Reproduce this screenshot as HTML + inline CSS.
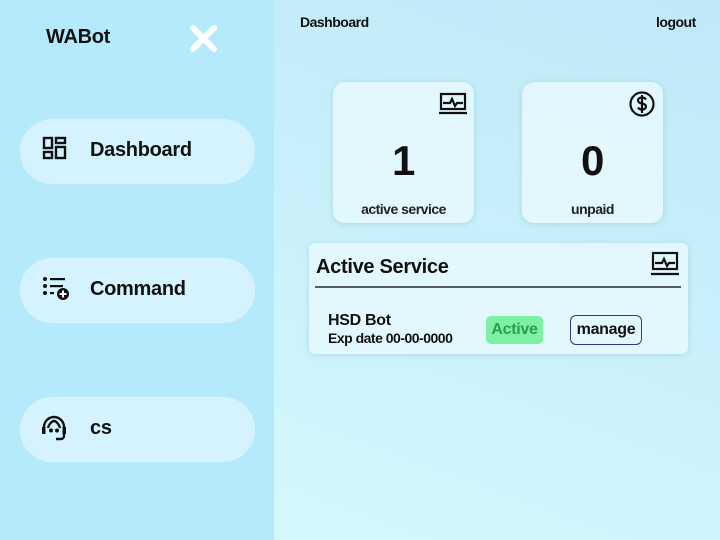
<!DOCTYPE html>
<html><head><meta charset="utf-8"><style>
*{margin:0;padding:0;box-sizing:border-box}
body{width:720px;height:540px;overflow:hidden;font-family:"Liberation Sans",Arial,sans-serif;color:#111;position:relative;background:linear-gradient(20deg,#d6fbfd 0%,#cdf3fb 40%,#bfe9f8 100%);letter-spacing:-0.3px}
.side{position:absolute;left:0;top:0;width:274px;height:540px;background:#b5e9fc}
.abs{position:absolute}
.nav{position:absolute;left:20px;width:235px;height:65px;border-radius:32px;background:rgba(225,246,255,.7);}
.nav span{position:absolute;left:70px;top:20px;font-size:20px;font-weight:bold}
.card{position:absolute;background:rgba(232,249,255,.8);border-radius:12px;box-shadow:0 1px 6px rgba(100,160,190,.3)}
</style></head><body>
<div class="side">
<div class="abs" style="left:46px;top:26px;font-size:20px;font-weight:bold">WABot</div>
<svg class="abs" style="left:188px;top:23px" width="31" height="31" viewBox="0 0 31 31"><path d="M5 5L26 26M26 5L5 26" stroke="#fff" stroke-width="6" stroke-linecap="round"/></svg>
<div class="nav" style="top:119px"><svg class="abs" style="left:22px;top:17px" width="26" height="26" viewBox="0 0 26 26" fill="none" stroke="#111" stroke-width="2.4"><rect x="2" y="2" width="8" height="10"/><rect x="14" y="2" width="9" height="5"/><rect x="2" y="16" width="8" height="6"/><rect x="14" y="11" width="9" height="11"/></svg><span>Dashboard</span></div>
<div class="nav" style="top:258px"><svg class="abs" style="left:22px;top:18px" width="28" height="26" viewBox="0 0 28 26"><g fill="#111"><circle cx="3" cy="3" r="2"/><circle cx="3" cy="10" r="2"/><circle cx="3" cy="17" r="2"/><rect x="8" y="2" width="15" height="2.2"/><rect x="8" y="9" width="13" height="2.2"/><rect x="8" y="16" width="4" height="2.2"/><circle cx="21" cy="18" r="6"/></g><path d="M21 14.5v7M17.5 18h7" stroke="#fff" stroke-width="2"/></svg><span>Command</span></div>
<div class="nav" style="top:397px"><svg class="abs" style="left:20px;top:17px" width="30" height="28" viewBox="0 0 30 28" fill="none" stroke="#111" stroke-width="2.4"><path d="M4 17v-4a10 10 0 0 1 20 0v4"/><path d="M8 14c1-4 4-7 6-7s5 3 6 7"/><path d="M24 18v4a3 3 0 0 1-3 3h-5"/><rect x="2" y="13" width="3.5" height="7" fill="#111" stroke="none"/><rect x="22.5" y="13" width="3.5" height="7" fill="#111" stroke="none"/><circle cx="11" cy="16.5" r=".8" fill="#111"/><circle cx="17" cy="16.5" r=".8" fill="#111"/></svg><span>cs</span></div>
</div>
<div class="abs" style="left:300px;top:14px;font-size:14px;font-weight:bold;letter-spacing:-0.5px">Dashboard</div>
<div class="abs" style="left:656px;top:14px;font-size:14px;font-weight:bold;letter-spacing:-0.5px">logout</div>
<div class="card" style="left:333px;top:82px;width:141px;height:141px">
<svg class="abs" style="left:105px;top:10px" width="30" height="24" viewBox="0 0 30 24" fill="none" stroke="#111" stroke-width="2.2"><rect x="3" y="2" width="24" height="15"/><path d="M1 21h28"/><path d="M5 11h7l2-4 3 7 2-3h6"/></svg>
<div class="abs" style="left:0;width:141px;top:55px;text-align:center;font-size:42px;font-weight:bold">1</div>
<div class="abs" style="left:0;width:141px;top:119px;text-align:center;font-size:14px;font-weight:bold;color:#222;letter-spacing:-0.5px">active service</div></div>
<div class="card" style="left:522px;top:82px;width:141px;height:141px">
<svg class="abs" style="left:106px;top:8px" width="28" height="28" viewBox="0 0 28 28" fill="none" stroke="#111" stroke-width="2.2"><circle cx="14" cy="14" r="11.5"/><path d="M18 9.5c-1-1.5-2.5-2-4-2-2.5 0-4 1.3-4 3s1.5 2.5 4 3 4 1.3 4 3-1.5 3-4 3c-1.7 0-3.2-.7-4-2M14 5v18"/></svg>
<div class="abs" style="left:0;width:141px;top:55px;text-align:center;font-size:42px;font-weight:bold">0</div>
<div class="abs" style="left:0;width:141px;top:119px;text-align:center;font-size:14px;font-weight:bold;color:#222;letter-spacing:-0.5px">unpaid</div></div>
<div class="card" style="left:309px;top:243px;width:379px;height:111px;border-radius:6px">
<div class="abs" style="left:7px;top:13px;font-size:20px;font-weight:bold">Active Service</div>
<svg class="abs" style="left:341px;top:8px" width="30" height="26" viewBox="0 0 30 26" fill="none" stroke="#111" stroke-width="2.2"><rect x="3" y="2" width="24" height="16"/><path d="M1 23h28"/><path d="M5 12h7l2-4 3 7 2-3h6"/></svg>
<div class="abs" style="left:6px;top:43px;width:366px;height:2px;background:#555e60"></div>
<div class="abs" style="left:19px;top:69px;font-size:16px;font-weight:bold">HSD Bot</div>
<div class="abs" style="left:19px;top:87px;font-size:14px;font-weight:bold;letter-spacing:-0.5px">Exp date 00-00-0000</div>
<div class="abs" style="left:177px;top:73px;width:57px;height:28px;background:#7ef0a4;border-radius:5px;color:#2c9b55;font-size:16px;font-weight:bold;text-align:center;line-height:28px">Active</div>
<div class="abs" style="left:261px;top:72px;width:72px;height:30px;border:1.5px solid #2a3b8c;border-radius:6px;font-size:16px;font-weight:bold;text-align:center;line-height:27px">manage</div>
</div>
</body></html>
